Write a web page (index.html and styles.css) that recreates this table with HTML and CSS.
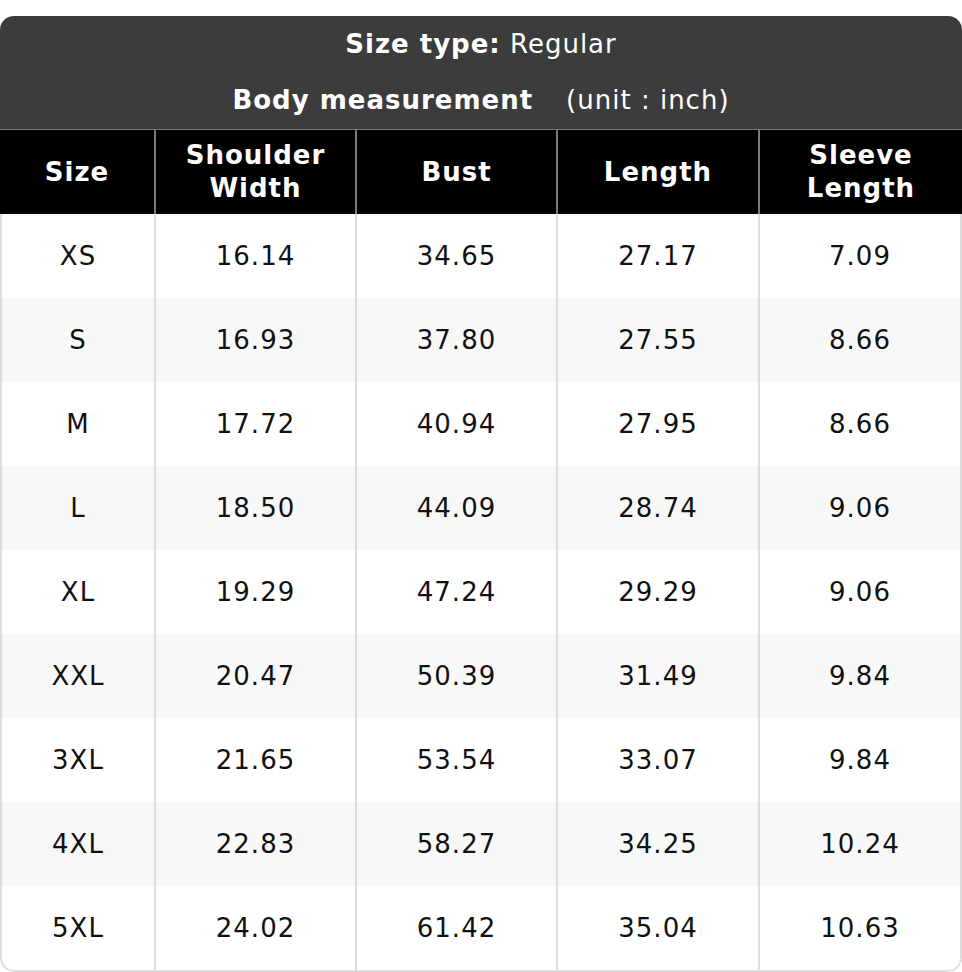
FILE: index.html
```html
<!DOCTYPE html>
<html>
<head>
<meta charset="utf-8">
<link rel="stylesheet" href="styles.css">
</head>
<body>
<div class="chart">
  <div class="title">
    <div class="title-line"><b>Size type:</b> Regular</div>
    <div class="title-line"><b>Body measurement</b><span class="unit">(unit : inch)</span></div>
  </div>
  <table class="grid head-grid">
    <colgroup>
      <col class="h1"><col class="c2"><col class="c3"><col class="c4"><col class="c5">
    </colgroup>
    <thead>
      <tr><th>Size</th><th>Shoulder<br>Width</th><th>Bust</th><th>Length</th><th>Sleeve<br>Length</th></tr>
    </thead>
  </table>
  <div class="body">
    <table class="grid">
      <colgroup>
        <col class="b1"><col class="c2"><col class="c3"><col class="c4"><col class="c5">
      </colgroup>
      <tbody>
        <tr><td>XS</td><td>16.14</td><td>34.65</td><td>27.17</td><td>7.09</td></tr>
        <tr><td>S</td><td>16.93</td><td>37.80</td><td>27.55</td><td>8.66</td></tr>
        <tr><td>M</td><td>17.72</td><td>40.94</td><td>27.95</td><td>8.66</td></tr>
        <tr><td>L</td><td>18.50</td><td>44.09</td><td>28.74</td><td>9.06</td></tr>
        <tr><td>XL</td><td>19.29</td><td>47.24</td><td>29.29</td><td>9.06</td></tr>
        <tr><td>XXL</td><td>20.47</td><td>50.39</td><td>31.49</td><td>9.84</td></tr>
        <tr><td>3XL</td><td>21.65</td><td>53.54</td><td>33.07</td><td>9.84</td></tr>
        <tr><td>4XL</td><td>22.83</td><td>58.27</td><td>34.25</td><td>10.24</td></tr>
        <tr><td>5XL</td><td>24.02</td><td>61.42</td><td>35.04</td><td>10.63</td></tr>
      </tbody>
    </table>
  </div>
</div>
</body>
</html>
```
FILE: styles.css
```css
html, body {
  margin: 0;
  padding: 0;
  background: #ffffff;
}
body {
  padding-top: 16px;
  font-family: "DejaVu Sans", sans-serif;
  letter-spacing: 1px;
}
.chart {
  width: 962px;
  border-radius: 14px;
  overflow: hidden;
  background: #ffffff;
}
.title {
  background: #3c3c3c;
  color: #ffffff;
  font-size: 26px;
  text-align: center;
  padding-top: 10px;
  height: 103px;
  border-bottom: 1px solid #7a7a7a;
}
.title-line {
  height: 56px;
  line-height: 36px;
}
.title-line b {
  font-weight: bold;
}
.unit {
  margin-left: 33px;
}
.body {
  border: 2px solid #dddddd;
  border-top: none;
  border-radius: 0 0 14px 14px;
  overflow: hidden;
}
.grid {
  width: 100%;
  border-collapse: collapse;
  table-layout: fixed;
}
.h1 { width: 155px; }
.b1 { width: 153px; }
.c2 { width: 201px; }
.c3 { width: 201px; }
.c4 { width: 202px; }
.c5 { width: auto; }
.grid th {
  background: #000000;
  color: #ffffff;
  font-size: 26px;
  font-weight: bold;
  line-height: 33px;
  height: 84px;
  padding: 0;
  box-sizing: border-box;
  border-left: 2px solid #7a7a7a;
  text-align: center;
}
.grid th:first-child,
.grid td:first-child {
  border-left: none;
}
.grid td {
  height: 84px;
  padding: 0;
  box-sizing: border-box;
  font-size: 26px;
  color: #111111;
  text-align: center;
  border-left: 2px solid #dddddd;
}
.grid tbody tr:nth-child(even) td {
  background: #f8f8f8;
}
```
